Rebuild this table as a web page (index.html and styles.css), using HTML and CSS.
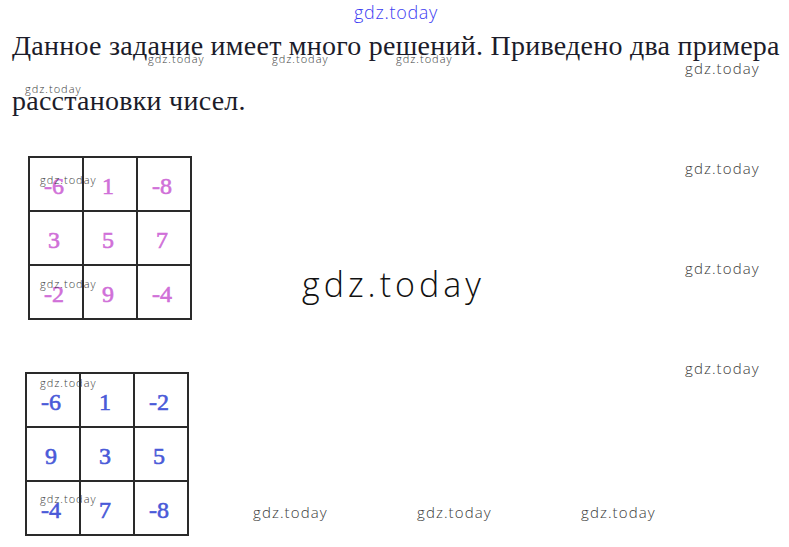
FILE: index.html
```html
<!DOCTYPE html>
<html lang="ru">
<head>
<meta charset="utf-8">
<link rel="stylesheet" href="styles.css">
</head>
<body>
<div class="page">
  <p class="task">Данное задание имеет много решений. Приведено два примера расстановки чисел.</p>
  <div class="square pink first">
    <span>-6</span><span>1</span><span>-8</span>
    <span>3</span><span>5</span><span>7</span>
    <span>-2</span><span>9</span><span>-4</span>
  </div>
  <div class="square blue second">
    <span>-6</span><span>1</span><span>-2</span>
    <span>9</span><span>3</span><span>5</span>
    <span>-4</span><span>7</span><span>-8</span>
  </div>

  <span class="wm top">gdz.today</span>
  <span class="wm s" style="left:148px;top:51px">gdz.today</span>
  <span class="wm s" style="left:272px;top:51px">gdz.today</span>
  <span class="wm s" style="left:396px;top:51px">gdz.today</span>
  <span class="wm s" style="left:25px;top:81px">gdz.today</span>
  <span class="wm m" style="left:685px;top:58px">gdz.today</span>
  <span class="wm m" style="left:685px;top:158px">gdz.today</span>
  <span class="wm m" style="left:685px;top:258px">gdz.today</span>
  <span class="wm m" style="left:685px;top:358px">gdz.today</span>
  <span class="wm s" style="left:40px;top:172px">gdz.today</span>
  <span class="wm s" style="left:40px;top:276px">gdz.today</span>
  <span class="wm s" style="left:40px;top:375px">gdz.today</span>
  <span class="wm s" style="left:40px;top:491px">gdz.today</span>
  <span class="wm m" style="left:253px;top:502px">gdz.today</span>
  <span class="wm m" style="left:417px;top:502px">gdz.today</span>
  <span class="wm m" style="left:581px;top:502px">gdz.today</span>
  <span class="wm big">gdz.today</span>
</div>
</body>
</html>
```

FILE: styles.css
```css
html, body {
  margin: 0;
  padding: 0;
  background: #fff;
}
.page {
  position: relative;
  width: 789px;
  height: 547px;
  overflow: hidden;
}
.task {
  margin: 18px 0 0 12px;
  width: 777px;
  font-family: "Liberation Serif", "DejaVu Serif", serif;
  font-size: 28px;
  letter-spacing: 0.25px;
  line-height: 55px;
  color: #1c1c2a;
}
.square {
  display: grid;
  grid-template-columns: repeat(3, 52px);
  grid-template-rows: repeat(3, 52px);
  gap: 2px;
  padding: 2px;
  width: max-content;
  background: #2a2a2a;
}
.square span {
  background: #fff;
  display: flex;
  align-items: center;
  justify-content: center;
  padding-top: 5px;
  padding-right: 4px;
  box-sizing: border-box;
  font-family: "Liberation Serif", "DejaVu Serif", serif;
  font-size: 24px;
  font-weight: normal;
  -webkit-text-stroke: 0.6px currentColor;
}
.first {
  margin: 28px 0 0 28px;
}
.second {
  margin: 52px 0 0 25px;
}
.pink span { color: #d070d8; }
.blue span { color: #4a5ad8; }

.wm {
  position: absolute;
  font-family: "Open Sans", "DejaVu Sans", sans-serif;
  font-weight: 300;
  color: #3a3a3a;
  white-space: nowrap;
}
.wm.s {
  font-size: 11px;
  letter-spacing: 1px;
}
.wm.m {
  font-size: 15px;
  letter-spacing: 1.1px;
}
.wm.top {
  left: 354px;
  top: 2px;
  font-size: 18px;
  line-height: 20px;
  color: #3c3cf2;
  letter-spacing: 0.7px;
}
.wm.big {
  left: 302px;
  top: 261px;
  font-size: 34px;
  color: #111;
  letter-spacing: 4px;
}
```
